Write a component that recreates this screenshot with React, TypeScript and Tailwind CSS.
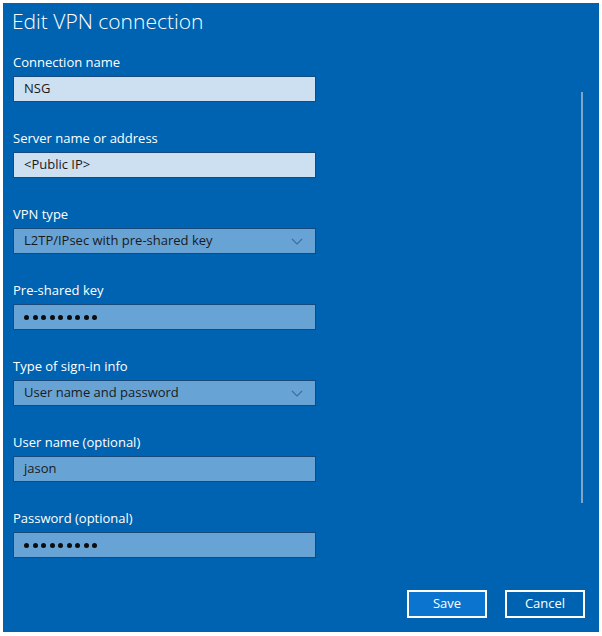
import React from "react";

const font = { fontFamily: '"Open Sans", "Noto Sans", sans-serif' };

function Label({ children }: { children: React.ReactNode }) {
  return <div className="h-5 leading-5 text-[13px] text-white">{children}</div>;
}

function Dots() {
  return (
    <div className="flex items-center gap-[3.5px]">
      {Array.from({ length: 9 }).map((_, i) => (
        <div key={i} className="w-[5px] h-[5px] rounded-full bg-[#0d0d0d]" />
      ))}
    </div>
  );
}

function Field({
  label,
  value,
  light,
  select,
  dots,
  first,
}: {
  label: string;
  value: string;
  light?: boolean;
  select?: boolean;
  dots?: boolean;
  first?: boolean;
}) {
  return (
    <div className={first ? "" : "mt-[26px]"}>
      <Label>{label}</Label>
      <div
        className={`mt-1 h-[26px] w-[303px] flex items-center justify-between pl-[10px] pr-[12px] border border-[#17497a] ${
          light ? "bg-[#cde0f1]" : "bg-[#68a3d6]"
        }`}
      >
        {dots ? <Dots /> : <span className="text-[13px] text-[#1a1a1a]">{value}</span>}
        {select && (
          <svg width="12" height="7" viewBox="0 0 12 7">
            <path d="M1 1 L6 6 L11 1" fill="none" stroke="#3b6d9e" strokeWidth="1.1" />
          </svg>
        )}
      </div>
    </div>
  );
}

export default function App() {
  return (
    <div className="w-[602px] h-[636px] bg-white pt-[3px] pl-[3px]" style={font}>
      <div className="relative w-[596px] h-[629px] bg-[#0063b1] pl-[10px] pt-[4px] flex flex-col">
        <div className="h-7 leading-7 text-[21px] font-light text-white -ml-[1px]">Edit VPN connection</div>
        <div className="mt-[17px]">
          <Field first label="Connection name" value="NSG" light />
          <Field label="Server name or address" value="<Public IP>" light />
          <Field label="VPN type" value="L2TP/IPsec with pre-shared key" select />
          <Field label="Pre-shared key" value="" dots />
          <Field label="Type of sign-in info" value="User name and password" select />
          <Field label="User name (optional)" value="jason" />
          <Field label="Password (optional)" value="" dots />
        </div>
        <div className="mt-[32px] flex justify-end gap-[18px] pr-[14px]">
          <button className="w-[80px] h-[28px] border-2 border-white bg-[#0a74cf] text-white text-[13px]">Save</button>
          <button className="w-[80px] h-[28px] border-2 border-white bg-[#0063b1] text-white text-[13px]">Cancel</button>
        </div>
        <div className="absolute left-[578px] top-[89px] w-[2px] h-[411px] bg-[#7fa5c9]" />
      </div>
    </div>
  );
}
